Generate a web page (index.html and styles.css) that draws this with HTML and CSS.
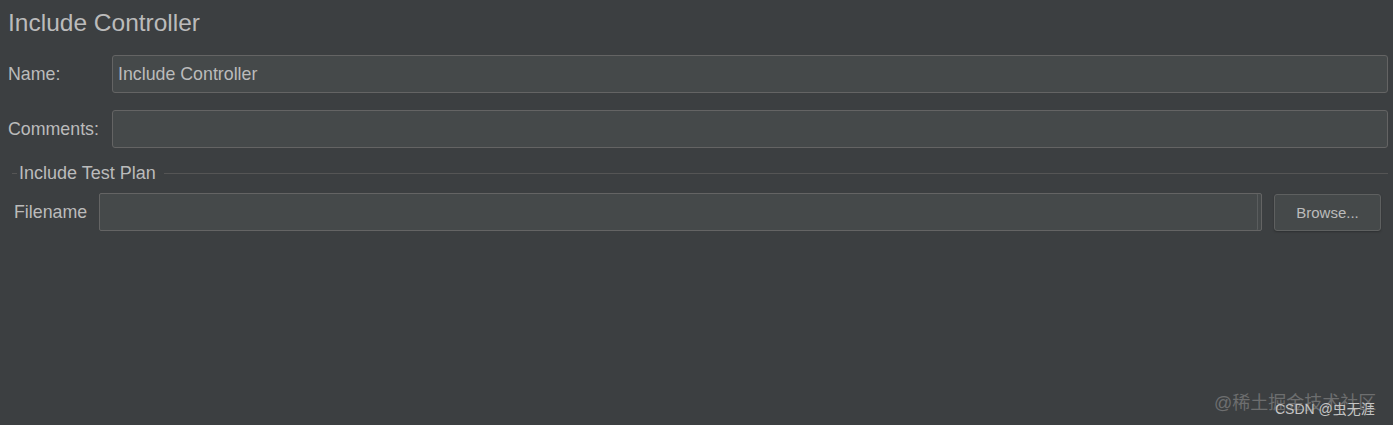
FILE: index.html
```html
<html>
<head>
  <meta charset="utf-8">
  <link rel="stylesheet" href="styles.css">
</head>
<body>
<div class="page">
  <h1 class="title">Include Controller</h1>
  <div class="row">
    <label class="label">Name:</label>
    <div class="field">Include Controller</div>
  </div>
  <div class="row">
    <label class="label">Comments:</label>
    <div class="field"></div>
  </div>
  <div class="group">
    <div class="group-head">
      <span class="rule-short"></span>
      <span class="group-title">Include Test Plan</span>
      <span class="rule"></span>
    </div>
    <div class="file-row">
      <label class="label file-label">Filename</label>
      <div class="field file-field"></div>
      <button class="button">Browse...</button>
    </div>
  </div>
</div>
<div class="watermark">
  <span class="wm-back">@稀土掘金技术社区</span>
  <span class="wm-front">CSDN @虫无涯</span>
</div>
</body>
</html>
```

FILE: styles.css
```css
body {
  margin: 0;
  background: #3c3f41;
  color: #bbbbbb;
  font-family: "Liberation Sans", Arial, sans-serif;
  height: 425px;
  overflow: hidden;
  position: relative;
}
.page {
  padding: 8px 5px 0 8px;
}
.title {
  margin: 0 0 17px;
  font-size: 24.5px;
  font-weight: normal;
  line-height: 30px;
  color: #bbbbbb;
}
.row {
  display: flex;
  align-items: center;
  margin-bottom: 17px;
}
.label {
  width: 104px;
  flex-shrink: 0;
  font-size: 17.8px;
}
.field {
  flex: 1;
  height: 38px;
  box-sizing: border-box;
  background: #45494a;
  border: 1px solid #646464;
  border-radius: 3px;
  padding: 0 5px;
  font-size: 17.8px;
  line-height: 36px;
  color: #bbbbbb;
}
.group {
  margin: -2px 0 0 4px;
}
.group-head {
  display: flex;
  align-items: center;
  height: 20px;
}
.rule-short {
  width: 5px;
  height: 1px;
  background: #555555;
  margin-right: 2px;
}
.group-title {
  font-size: 18px;
  margin-right: 8px;
}
.rule {
  flex: 1;
  height: 1px;
  background: #555555;
}
.file-row {
  display: flex;
  align-items: center;
  margin-top: 10px;
  padding: 0 7px 0 2px;
}
.file-label {
  width: 85px;
}
.file-field {
  border-radius: 2px;
  box-shadow: inset -3px 0 0 #45494a, inset -4px 0 0 #5a5d5e;
}
.button {
  margin-left: 12px;
  width: 107px;
  height: 37px;
  background: #45494a;
  border: 1px solid #5e6060;
  border-radius: 3px;
  color: #bbbbbb;
  font-family: "Liberation Sans", Arial, sans-serif;
  font-size: 15px;
  box-shadow: 0 1px 2px rgba(0, 0, 0, 0.25);
}
.watermark {
  position: absolute;
  right: 17px;
  bottom: 10px;
  width: 162px;
  height: 22px;
  font-family: "Liberation Sans", "Noto Sans CJK SC", sans-serif;
}
.wm-back {
  position: absolute;
  left: 0;
  top: -5px;
  font-size: 18px;
  color: #6d6e6f;
  white-space: nowrap;
}
.wm-front {
  position: absolute;
  left: 61px;
  top: 5px;
  font-size: 14px;
  color: #c5c5c5;
  white-space: nowrap;
}
```
